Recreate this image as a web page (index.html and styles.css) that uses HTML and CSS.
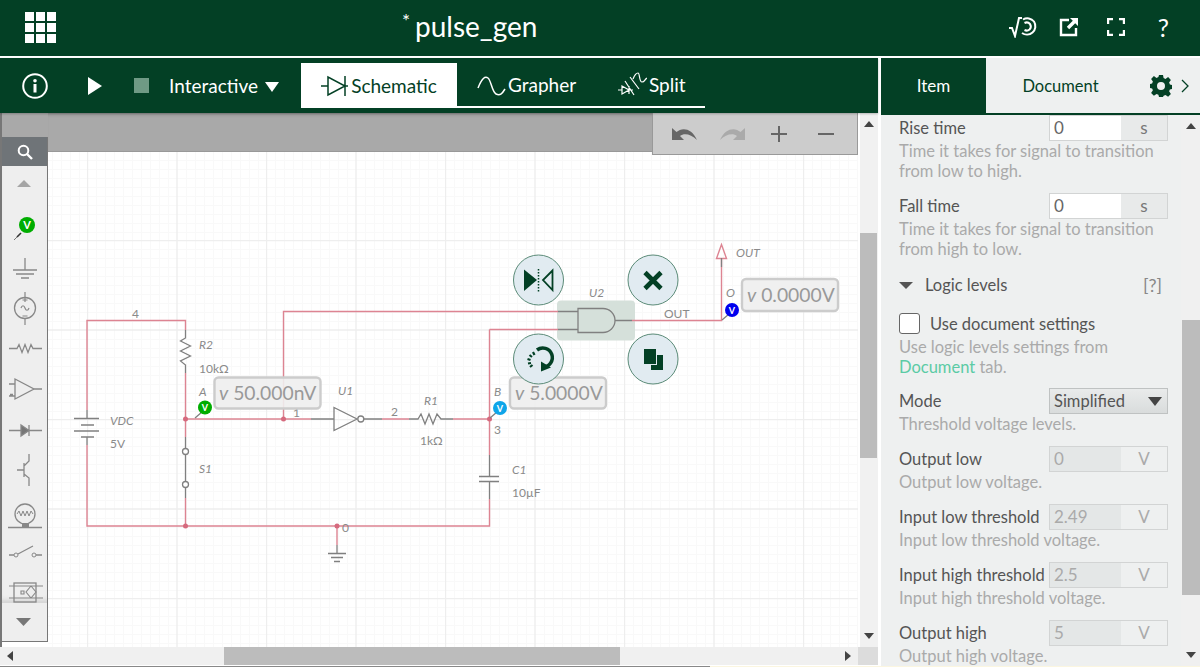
FILE: index.html
```html
<!DOCTYPE html>
<html lang="en">
<head>
<meta charset="utf-8">
<title>pulse_gen</title>
<link rel="stylesheet" href="styles.css">
</head>
<body>
<div class="app">
  <header class="topbar">
    <div class="apps"><i></i><i></i><i></i><i></i><i></i><i></i><i></i><i></i><i></i></div>
    <div class="title"><span class="star">*</span>pulse_gen</div>
    <div class="top-icons">
      <svg class="ti-sqrt" width="28" height="22" viewBox="0 0 28 22"><path d="M0 12h3l3 8 4-18h3" fill="none" stroke="#fff" stroke-width="2"/><path d="M14 3.500a8.500 8.500 0 0 1 11 2 8.500 8.500 0 0 1-1.500 11 8.500 8.500 0 0 1-10.500 .5M15.500 7a4.500 4.500 0 0 1 5.500 1 4.500 4.500 0 0 1-.5 5.500 4.500 4.500 0 0 1-5 .5" fill="none" stroke="#fff" stroke-width="2"/></svg>
      <svg class="ti-ext" width="20" height="20" viewBox="0 0 20 20"><path d="M10 3H2v15h15v-7" fill="none" stroke="#fff" stroke-width="2.400"/><path d="M11 1h8v8l-2.800-2.800-6 6-2.400-2.400 6-6z" fill="#fff"/></svg>
      <svg class="ti-full" width="18" height="18" viewBox="0 0 18 18"><path d="M1 6V1h5M12 1h5v5M17 12v5h-5M6 17H1v-5" fill="none" stroke="#fff" stroke-width="2.400"/></svg>
      <span class="ti-help">?</span>
    </div>
  </header>
  <div class="main">
    <section class="left">
      <nav class="toolbar">
        <svg class="tb-info" width="26" height="26" viewBox="0 0 26 26"><circle cx="13" cy="13" r="11.800" fill="none" stroke="#fff" stroke-width="2"/><rect x="11.500" y="11" width="3" height="8.500" fill="#fff"/><circle cx="13" cy="7.800" r="1.800" fill="#fff"/></svg>
        <svg class="tb-play" width="15" height="18" viewBox="0 0 15 18"><path d="M0 0l14 9-14 9z" fill="#fff"/></svg>
        <span class="tb-stop"></span>
        <span class="tb-mode">Interactive</span>
        <svg class="tb-caret" width="14" height="10" viewBox="0 0 14 10"><path d="M0 0h14l-7 10z" fill="#fff"/></svg>
        <div class="tabs">
          <div class="tab tab-active">
            <svg width="28" height="24" viewBox="0 0 28 24"><path d="M0 12h7M24 12h3M24 2v20M7 3v18l17-9z" fill="none" stroke="#034025" stroke-width="1.500"/></svg>
            <span>Schematic</span>
          </div>
          <div class="tab tab-grapher">
            <svg width="29" height="24" viewBox="0 0 29 24"><path d="M1 15C5 5 8 3 11 5s4 14 8 16 6 0 9-5" fill="none" stroke="#fff" stroke-width="1.500"/></svg>
            <span>Grapher</span>
          </div>
          <div class="tab tab-split">
            <svg width="29" height="26" viewBox="0 0 29 26"><path d="M0 18h4M11 18h4M4 14v8l7-4zM11 14v8M7 9l9 14M12 5l9 12M15 7c2-5 3-6 5-6s1 9 4 9 2-2 5-4" fill="none" stroke="#fff" stroke-width="1.200"/></svg>
            <span>Split</span>
          </div>
        </div>
      </nav>
      <div class="workspace">
        <div class="dock">
          <div class="dock-top"></div>
          <div class="toolbox">
            <div class="tool-search">
              <svg width="16" height="16" viewBox="0 0 16 16"><circle cx="6.500" cy="6.500" r="4.800" fill="none" stroke="#fff" stroke-width="2"/><path d="M10 10l5 5" stroke="#fff" stroke-width="2.400"/></svg>
            </div>
            <div class="tool-list">
              <svg class="tool-up" width="14" height="7" viewBox="0 0 14 7"><path d="M0 7l7-7 7 7z" fill="#a5a5a5"/></svg>
              <svg class="tool" width="44" height="46" viewBox="0 0 44 46"><path d="M11 39l6-6" stroke="#777" stroke-width="1"/><path d="M14 36l4-4" stroke="#333" stroke-width="1.600"/><circle cx="24" cy="24" r="8" fill="#00ad00"/><text x="24" y="28" class="v-mark">V</text></svg>
              <svg class="tool" width="44" height="41" viewBox="0 0 44 41"><path d="M22 11v12M10 23h24M13 27h18M18 31h8" stroke="#888" stroke-width="1.300" fill="none"/></svg>
              <svg class="tool" width="44" height="40" viewBox="0 0 44 40"><circle cx="22" cy="20" r="10.500" fill="none" stroke="#888" stroke-width="1.300"/><path d="M22 4v10M22 30v7M19.500 12h5M19.500 28h5M18 20c1-3 3-3 4 0s3 3 4 0" stroke="#888" stroke-width="1.200" fill="none"/></svg>
              <svg class="tool" width="44" height="41" viewBox="0 0 44 41"><path d="M6 20.500h8l2-4 3 8 3-8 3 8 3-8 2 4h9" stroke="#888" stroke-width="1.300" fill="none"/></svg>
              <svg class="tool" width="44" height="41" viewBox="0 0 44 41"><path d="M12 10v20l19-10zM31 20h8M6 15h6M6 27h6M7 25.500h3" stroke="#888" stroke-width="1.300" fill="none"/></svg>
              <svg class="tool" width="44" height="41" viewBox="0 0 44 41"><path d="M6 20.500h12M26 20.500h13" stroke="#888" stroke-width="1.300"/><path d="M18 15v11l8-5.500zM26 15v11" stroke="#888" stroke-width="1.300" fill="#777"/></svg>
              <svg class="tool" width="44" height="41" viewBox="0 0 44 41"><path d="M14 19h7M21 12v14M21 15l5-5V3M21 23l5 4v8" stroke="#888" stroke-width="1.300" fill="none"/></svg>
              <svg class="tool" width="44" height="44" viewBox="0 0 44 44"><circle cx="22" cy="22" r="10" fill="none" stroke="#888" stroke-width="1.300"/><path d="M14 22l2-3 2 5 2-5 2 5 2-5 2 5 2-5 2 3" stroke="#888" stroke-width="1" fill="none"/><rect x="19" y="31" width="7" height="4" fill="#888"/><path d="M5 35.500h34" stroke="#888" stroke-width="1.300"/></svg>
              <svg class="tool" width="44" height="40" viewBox="0 0 44 40"><circle cx="13" cy="19" r="2" fill="none" stroke="#888"/><circle cx="31" cy="19" r="2" fill="none" stroke="#888"/><path d="M6 19h5M33 19h6M15 18l15-8" stroke="#888" stroke-width="1.300"/></svg>
              <svg class="tool" width="44" height="27" viewBox="0 0 44 27"><rect x="11" y="7" width="22" height="19" fill="none" stroke="#888" stroke-width="1.300"/><path d="M6 10h34M6 22h34M28 10l5 6-5 6-5-6zM18 15h3v3h-3z" stroke="#888" stroke-width="1.100" fill="none"/></svg>
            </div>
            <div class="tool-foot">
              <svg width="15" height="8" viewBox="0 0 15 8"><path d="M0 0h15l-7.500 8z" fill="#777"/></svg>
            </div>
          </div>
        </div>
        <div class="stage">
          <div class="gray-bar">
            <div class="canvas-tools">
              <svg class="ct-undo" width="25" height="13" viewBox="0 0 25 13"><path d="M0 13V1l4.500 4C10 0 20 1 25 13 19 7 12 6 8 9l4 4z" fill="#666"/></svg>
              <svg class="ct-redo" width="25" height="13" viewBox="0 0 25 13"><path d="M25 13V1l-4.500 4C15 0 5 1 0 13 6 7 13 6 17 9l-4 4z" fill="#aaa"/></svg>
              <svg class="ct-plus" width="18" height="18" viewBox="0 0 18 18"><path d="M9 1v16M1 9h16" stroke="#666" stroke-width="2"/></svg>
              <svg class="ct-minus" width="18" height="18" viewBox="0 0 18 18"><path d="M1 9h16" stroke="#666" stroke-width="2"/></svg>
            </div>
          </div>
          <svg class="schematic" width="810" height="495" viewBox="48 152 810 495">
            <defs>
              <pattern id="gridtile" x="87" y="240" width="179" height="179" patternUnits="userSpaceOnUse">
                <path class="grid-minor" d="M9.500 0v179M18.500 0v179M27.500 0v179M36.500 0v179M45.500 0v179M54.500 0v179M63.500 0v179M72.500 0v179M81.500 0v179M99.500 0v179M108.500 0v179M117.500 0v179M126.500 0v179M135.500 0v179M144.500 0v179M153.500 0v179M162.500 0v179M171.500 0v179M0 9.500h179M0 18.500h179M0 27.500h179M0 36.500h179M0 45.500h179M0 54.500h179M0 63.500h179M0 72.500h179M0 81.500h179M0 99.500h179M0 108.500h179M0 117.500h179M0 126.500h179M0 135.500h179M0 144.500h179M0 153.500h179M0 162.500h179M0 171.500h179"/>
                <path class="grid-major" d="M.5 0v179M90 0v179M0 .5h179M0 90h179"/>
              </pattern>
            </defs>
            <rect x="48" y="152" width="810" height="495" fill="#fff"/>
            <rect x="48" y="152" width="810" height="495" fill="url(#gridtile)"/>

            <rect x="557" y="300.500" width="78" height="40" rx="4" fill="#d5e0da"/>

            <g class="wire">
              <path d="M87 410V320.500H185.500V330"/>
              <path d="M87 445V526H489.500V499"/>
              <path d="M185.500 373V437M185.500 498V526"/>
              <path d="M185.500 419H311"/>
              <path d="M283.500 419V311.500H558"/>
              <path d="M382 419H409M453 419H489.500"/>
              <path d="M489.500 329.500H558M489.500 329.500V455"/>
              <path d="M337 526V545"/>
              <path d="M632 320.500H721.500V258"/>
              <path d="M721.500 244.500L716.500 258.500H726.500Z"/>
            </g>
            <g class="dots">
              <circle cx="185.500" cy="419" r="2.500"/><circle cx="283.500" cy="419" r="2.500"/><circle cx="489.500" cy="419" r="2.500"/><circle cx="185.500" cy="526" r="2.500"/><circle cx="337" cy="526" r="2.500"/>
            </g>
            <g class="part">
              <path d="M87 410V418M74 418.500H99M81 425H94M74 431H99M81 437H94M87 437V445"/>
              <path d="M185.500 330V338L180.500 341 190.500 346 180.500 351 190.500 356 180.500 361 185.500 365V373"/>
              <path d="M185.500 437V448M185.500 455V481M185.500 488V498"/>
              <circle cx="185.500" cy="451.500" r="3" fill="#fff"/><circle cx="185.500" cy="484.500" r="3" fill="#fff"/>
              <path d="M311 419H334M334 407.500V430.500L357 419ZM364 419H382"/>
              <circle cx="360.800" cy="419" r="3" fill="#fff"/>
              <path d="M409 419H418L421 414 425 424 429 414 433 424 437 414 441 419H453"/>
              <path d="M489.500 455V476M479 476.500H499M479 481.500H499M489.500 481.500V499"/>
              <path d="M337 545V553M328 553.500H346M331 557.500H343M334 561.500H340"/>
              <path d="M558 311.500H578M558 329.500H578M578 308.500H603A12 12 0 0 1 603 332.500H578ZM615 320.500H632"/>
              <path d="M721.500 258V267M195 418L202 412M490 418L497 412M722 320L729 314"/>
            </g>

            <circle cx="205" cy="407.500" r="7" fill="#00ad00"/><text x="205" y="411" class="v-small">V</text>
            <circle cx="500" cy="408" r="7" fill="#0ea5e9"/><text x="500" y="411.500" class="v-small">V</text>
            <circle cx="732" cy="310" r="7" fill="#0000ee"/><text x="732" y="313.500" class="v-small">V</text>

            <g class="lbl">
              <text x="132" y="318">4</text>
              <text x="293" y="417">1</text>
              <text x="391" y="416">2</text>
              <text x="494" y="434">3</text>
              <text x="342" y="532">0</text>
              <text x="664" y="318">OUT</text>
              <text x="199" y="373">10kΩ</text>
              <text x="110" y="448">5V</text>
              <text x="420" y="445">1kΩ</text>
              <text x="512" y="497">10µF</text>
            </g>
            <g class="lbl ital">
              <text x="199" y="349">R2</text>
              <text x="199" y="396">A</text>
              <text x="110" y="425">VDC</text>
              <text x="199" y="473">S1</text>
              <text x="338" y="395">U1</text>
              <text x="424" y="405">R1</text>
              <text x="494" y="396">B</text>
              <text x="512" y="474">C1</text>
              <text x="589" y="297">U2</text>
              <text x="736" y="257">OUT</text>
              <text x="726" y="297">O</text>
            </g>

            <g class="tag">
              <rect x="214.500" y="377.500" width="106" height="31" rx="4"/>
              <text x="219" y="400"><tspan class="it">v</tspan> 50.000nV</text>
              <rect x="510" y="377.500" width="96" height="31" rx="4"/>
              <text x="515" y="400"><tspan class="it">v</tspan> 5.0000V</text>
              <rect x="742" y="279" width="96" height="32" rx="4"/>
              <text x="747" y="302"><tspan class="it">v</tspan> 0.0000V</text>
            </g>

            <g class="action">
              <circle cx="538.500" cy="280" r="25"/>
              <circle cx="653" cy="280" r="25"/>
              <circle cx="538.500" cy="359" r="25"/>
              <circle cx="653" cy="359" r="25"/>
            </g>
            <path d="M524 269.500V291L537 280Z" fill="#034025"/>
            <path d="M552.500 270.500V290L543 280Z" fill="none" stroke="#034025" stroke-width="1.800"/>
            <path d="M538.500 269V292" stroke="#034025" stroke-width="1.500" stroke-dasharray="1.500 1.500"/>
            <path d="M645 272.500L661 288.500M661 272.500L645 288.500" stroke="#034025" stroke-width="4.600"/>
            <path d="M537 350A9.500 9.500 0 1 1 543 367" fill="none" stroke="#034025" stroke-width="3.500"/>
            <path d="M541 361.500L551 367.500 541 371.500Z" fill="#034025"/>
            <path d="M533 352l1.500 3M529.500 355l2.500 2M527.500 359l3 1M528 363.500l3-.5M530 367l2.500-2" stroke="#034025" stroke-width="2.200"/>
            <rect x="651" y="355" width="12" height="15" fill="#034025"/>
            <rect x="643" y="348" width="14" height="17" fill="#e1ebf1"/>
            <rect x="644" y="349" width="12" height="15" fill="#034025"/>
          </svg>
        </div>
        <div class="vscroll">
          <svg width="10" height="6" viewBox="0 0 10 6"><path d="M0 6l5-6 5 6z" fill="#444"/></svg>
          <div class="vthumb"></div>
          <svg width="10" height="6" viewBox="0 0 10 6"><path d="M0 0h10L5 6z" fill="#444"/></svg>
        </div>
        <div class="hscroll">
          <svg width="6" height="10" viewBox="0 0 6 10"><path d="M6 0v10L0 5z" fill="#444"/></svg>
          <div class="hthumb"></div>
          <svg width="6" height="10" viewBox="0 0 6 10"><path d="M0 0v10l6-5z" fill="#444"/></svg>
        </div>
        <div class="corner"></div>
      </div>
    </section>
    <aside class="right">
      <div class="rtabs">
        <div class="rtab-item">Item</div>
        <div class="rtab-doc">Document</div>
        <svg class="gear" width="24" height="24" viewBox="0 0 24 24"><path fill="#034025" fill-rule="evenodd" d="M10 1h4l.6 3.100 1.900.8 2.600-1.800 2.800 2.800-1.800 2.600.8 1.900L23 11v4l-2.100.4-.8 1.900 1.800 2.600-2.800 2.800-2.600-1.800-1.900.8L14 23h-4l-.6-2.300-1.900-.8-2.600 1.800-2.800-2.800 1.800-2.600-.8-1.900L1 14v-4l2.100-.6.8-1.900-1.800-2.600 2.800-2.800 2.600 1.800 1.900-.8zM12 8a4 4 0 1 0 0 8 4 4 0 0 0 0-8z"/></svg>
        <svg class="chev" width="9" height="14" viewBox="0 0 9 14"><path d="M1 1l6 6-6 6" fill="none" stroke="#034025" stroke-width="1.300"/></svg>
      </div>
      <div class="rbody">
        <div class="props">
          <div class="row first"><span class="lab">Rise time</span><span class="field"><span class="val">0</span><span class="unit">s</span></span></div>
          <p class="help">Time it takes for signal to transition<br>from low to high.</p>
          <div class="row"><span class="lab">Fall time</span><span class="field"><span class="val">0</span><span class="unit">s</span></span></div>
          <p class="help">Time it takes for signal to transition<br>from high to low.</p>
          <div class="section"><svg width="14" height="7" viewBox="0 0 14 7"><path d="M0 0h14L7 7z" fill="#555"/></svg><span class="sec-name">Logic levels</span><span class="sec-q">[?]</span></div>
          <div class="check"><span class="box"></span><span class="lab">Use document settings</span></div>
          <p class="help">Use logic levels settings from<br><span class="link">Document</span> tab.</p>
          <div class="row tight"><span class="lab">Mode</span><span class="select"><span>Simplified</span><svg width="14" height="9" viewBox="0 0 14 9"><path d="M0 0h14L7 9z" fill="#444"/></svg></span></div>
          <p class="help">Threshold voltage levels.</p>
          <div class="row"><span class="lab">Output low</span><span class="field off"><span class="val">0</span><span class="unit">V</span></span></div>
          <p class="help">Output low voltage.</p>
          <div class="row"><span class="lab">Input low threshold</span><span class="field off"><span class="val">2.49</span><span class="unit">V</span></span></div>
          <p class="help">Input low threshold voltage.</p>
          <div class="row"><span class="lab">Input high threshold</span><span class="field off"><span class="val">2.5</span><span class="unit">V</span></span></div>
          <p class="help">Input high threshold voltage.</p>
          <div class="row"><span class="lab">Output high</span><span class="field off"><span class="val">5</span><span class="unit">V</span></span></div>
          <p class="help">Output high voltage.</p>
        </div>
        <div class="rscroll">
          <svg width="10" height="6" viewBox="0 0 10 6"><path d="M0 6l5-6 5 6z" fill="#444"/></svg>
          <div class="rthumb"></div>
          <svg width="10" height="6" viewBox="0 0 10 6"><path d="M0 0h10L5 6z" fill="#444"/></svg>
        </div>
      </div>
    </aside>
  </div>
  <div class="statusline"></div>
</div>
</body>
</html>
```
FILE: styles.css
```css
* { box-sizing: border-box; }
html, body { margin: 0; padding: 0; height: 100%; overflow: hidden; background: #fff; }
body { font-family: Lato, "Open Sans", sans-serif; color: #555; }
.app { width: 1200px; height: 667px; display: flex; flex-direction: column; overflow: hidden; }
.statusline { height: 1px; flex: none; background: linear-gradient(90deg, #888 710px, #fbf6e0 710px); }

.topbar { height: 56px; flex: none; background: #034025; color: #fff; display: flex; align-items: center; padding-left: 25px; }
.apps { width: 32px; display: grid; grid-template-columns: repeat(3, 9px); grid-auto-rows: 9px; gap: 2px; margin-top: -1px; }
.apps i { background: #fff; display: block; }
.title { margin-left: 345px; font-size: 28px; line-height: 32px; display: flex; margin-top: -4px; }
.star { font-size: 19px; line-height: 22px; width: 13px; }
.top-icons { margin-left: auto; display: flex; align-items: center; padding-right: 31px; margin-top: -3px; }
.ti-ext { margin-left: 22px; }
.ti-full { margin-left: 28px; }
.ti-help { font-size: 25px; line-height: 24px; margin-left: 33px; }

.main { margin-top: 2px; flex: 1; display: flex; min-height: 0; }
.left { width: 878px; flex: none; display: flex; flex-direction: column; }
.toolbar { height: 55px; flex: none; background: #034025; display: flex; align-items: center; padding-left: 22px; box-shadow: 0 1px 2px rgba(0,0,0,.25); position: relative; z-index: 2; }
.tb-play { margin-left: 40px; }
.tb-stop { width: 15px; height: 15px; background: #6f9a85; margin-left: 31px; }
.tb-mode { color: #fff; font-size: 19px; margin-left: 20px; }
.tb-caret { margin-left: 7px; margin-top: 2px; }
.tabs { display: flex; align-items: stretch; align-self: flex-start; margin-left: 22px; margin-top: 5px; height: 45px; border-bottom: 2px solid #fff; width: 404px; }
.tab { display: flex; align-items: center; color: #fff; font-size: 19px; gap: 2px; }
.tab-active { width: 156px; background: #fff; color: #034025; justify-content: center; height: 45px; }
.tab-grapher { margin-left: 20px; width: 120px; }
.tab-split { margin-left: 21px; }

.workspace { flex: 1; min-height: 0; display: grid; grid-template-columns: 48px 810px 20px; grid-template-rows: 534px 20px; background: #fff; }
.dock { display: flex; flex-direction: column; border-left: 2px solid #777; background: #fff; }
.dock-top { height: 24px; background: #a9a9a9; flex: none; }
.toolbox { height: 505px; flex: none; background: #eee; border-right: 1.500px solid #777; border-bottom: 1.500px solid #777; display: flex; flex-direction: column; overflow: hidden; }
.tool-search { height: 29px; flex: none; background: #6f7478; display: flex; align-items: center; justify-content: center; }
.tool-list { height: 437px; flex: none; overflow: hidden; display: flex; flex-direction: column; align-items: center; padding-top: 14px; box-shadow: inset 0 -6px 5px -3px #d2d2d2; }
.tool-up { flex: none; margin-bottom: 14px; margin-left: -2px; }
.tool { flex: none; display: block; }
.tool-foot { flex: 1; display: flex; align-items: center; justify-content: center; padding-right: 2px; }
.v-mark { font: 700 11px Lato, sans-serif; fill: #fff; text-anchor: middle; }
.v-small { font: 700 9px Lato, sans-serif; fill: #fff; text-anchor: middle; }

.stage { display: flex; flex-direction: column; min-width: 0; }
.gray-bar { height: 39px; flex: none; background: #a9a9a9; border-bottom: 1px solid #999; display: flex; justify-content: flex-end; position: relative; z-index: 1; box-shadow: inset 0 4px 4px -3px #8a8a8a; }
.canvas-tools { width: 206px; height: 42px; flex: none; background: #ccc; border: 1px solid #999; border-top: 0; display: flex; align-items: center; padding: 0 0 0 19px; }
.ct-redo { margin-left: 23px; }
.ct-plus { margin-left: 25px; }
.ct-minus { margin-left: 29px; }
.schematic { display: block; flex: none; }
.grid-minor { fill: none; stroke: #f9f9f9; stroke-width: 1; }
.grid-major { fill: none; stroke: #eeeeee; stroke-width: 1.400; }
.wire path, .wire { fill: none; stroke: #dd8492; stroke-width: 1.400; }
.dots { fill: #d66a7e; }
.part { fill: none; stroke: #808080; stroke-width: 1.300; }
.lbl text { font: 400 12px Lato, sans-serif; fill: #8a8a8a; }
.lbl.ital text { font-style: italic; }
.tag rect { fill: #eee; fill-opacity: .9; stroke: #ccc; stroke-width: 2.400; }
.tag text { font: 400 19.300px Lato, sans-serif; fill: #999; }
.tag .it { font-style: italic; }
.action circle { fill: #e1ebf1; stroke: #5b8b78; stroke-width: 1; }

.vscroll { background: #f1f1f1; margin-left: 2px; display: flex; flex-direction: column; align-items: center; padding: 8px 0 8px; }
.vthumb { width: 17px; height: 225px; background: #bcbcbc; margin: 106px 1px auto 0; }
.hscroll { grid-column: 1 / 3; background: #f0f0f0; display: flex; align-items: center; height: 18px; padding: 0 7px; }
.hthumb { width: 396px; height: 18px; background: #bcbcbc; margin-left: 211px; margin-right: auto; }
.corner { height: 18px; background: #dcdcdc; }

.right { margin-left: 3px; flex: 1; min-width: 0; display: flex; flex-direction: column; background: #eef0f0; }
.rtabs { height: 57px; flex: none; display: flex; align-items: center; border-bottom: 2px solid #034025; background: #eef0f0; }
.rtab-item { width: 105px; height: 55px; background: #034025; color: #fff; font-size: 17px; display: flex; align-items: center; justify-content: center; }
.rtab-doc { width: 149px; font-size: 16.500px; color: #034025; text-align: center; }
.gear { margin-left: 14px; margin-top: 1px; }
.chev { margin-left: 8px; margin-top: 1px; }
.rbody { flex: 1; min-height: 0; display: flex; }
.props { width: 299px; flex: none; padding: 0 12px 0 18px; overflow: hidden; font-size: 16.500px; }
.row { display: flex; justify-content: space-between; align-items: center; height: 26px; margin-top: 12px; }
.row.first { margin-top: 0; }
.row.tight { margin-top: 11px; }
.lab { color: #555; font-size: 16.500px; white-space: nowrap; margin-top: -1px; }
.help { margin: 0; color: #aaa; font-size: 16.500px; line-height: 20px; white-space: nowrap; }
.field { width: 119px; height: 26px; flex: none; display: flex; border: 1px solid #d2d4d4; background: #e8eaea; }
.val { width: 71px; background: #fff; padding-left: 4px; color: #666; line-height: 24px; font-size: 17px; }
.unit { flex: 1; text-align: center; color: #777; line-height: 24px; font-size: 17px; }
.off { background: #eef0f0; }
.off .val { background: #e4e7e7; color: #aaa; }
.off .unit { color: #aaa; }
.section { display: flex; align-items: center; height: 24px; margin-top: 14px; }
.sec-name { margin-left: 12px; color: #555; }
.sec-q { margin-left: auto; color: #888; font-size: 18px; padding-right: 6px; }
.check { display: flex; align-items: center; height: 23px; margin-top: 15px; }
.box { width: 21px; height: 21px; background: #fff; border: 1px solid #666; border-radius: 3px; }
.check .lab { margin-left: 10px; margin-top: 0; }
.check + .help { margin-top: 2px; }
.link { color: #5bcba5; }
.select { width: 119px; height: 26px; flex: none; background: linear-gradient(#e9ebeb, #d9dcdc); border: 1px solid #bfc2c2; display: flex; align-items: center; justify-content: space-between; padding: 0 5px 0 4px; color: #555; }
.rscroll { width: 20px; flex: none; margin-left: 1px; background: #f0f0f0; display: flex; flex-direction: column; align-items: center; padding: 8px 0; }
.rthumb { width: 18px; height: 275px; background: #bcbcbc; margin-top: 191px; margin-bottom: auto; }
```
